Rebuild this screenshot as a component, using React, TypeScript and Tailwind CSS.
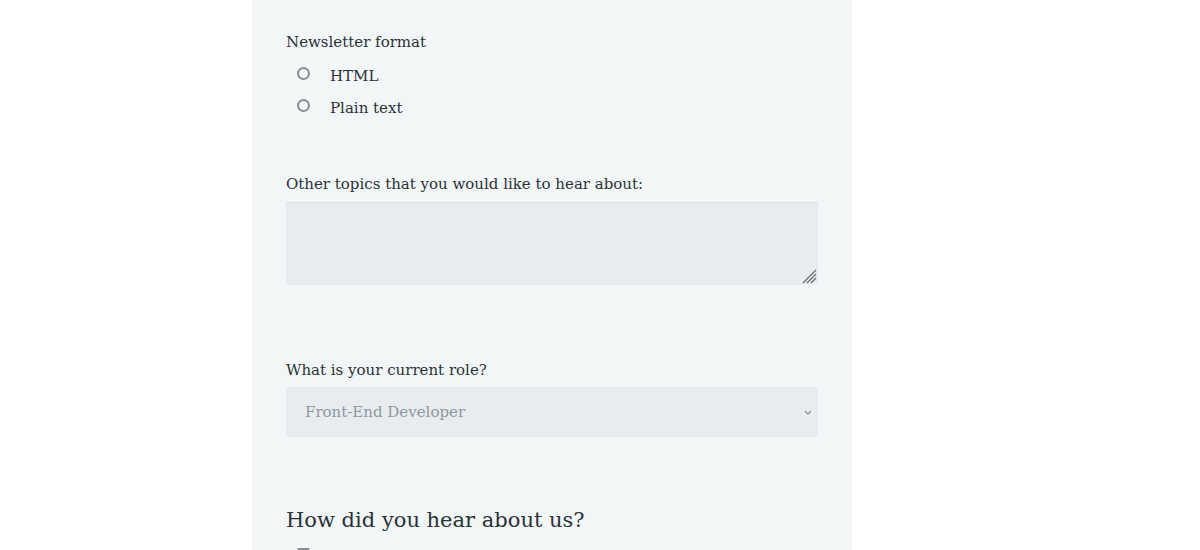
import React from "react";

const font = { fontFamily: '"DejaVu Serif", "Liberation Serif", serif' };

export default function App() {
  return (
    <div className="w-[1200px] h-[550px] overflow-hidden bg-white pl-[252px]" style={font}>
      <div className="w-[600px] h-[550px] bg-[#f2f6f7] px-[34px] pt-[32px] text-[#2b3238] text-[15px]">
        <div className="leading-[20px]">Newsletter format</div>
        <div className="mt-[13px] flex flex-col gap-[12px]">
          {["HTML", "Plain text"].map((t) => (
            <label key={t} className="flex items-center h-[20px] pl-[11px]">
              <span className="w-[13px] h-[13px] rounded-full border-2 border-[#8c8c98] bg-[#f6f7f9] -mt-[3px]" />
              <span className="ml-[20px] mt-[2px]">{t}</span>
            </label>
          ))}
        </div>
        <div className="mt-[57px] leading-[20px]">Other topics that you would like to hear about:</div>
        <div className="mt-[8px] h-[83px] bg-[#e8ecee] border-t border-[#dde3e6] relative">
          <svg className="absolute right-[1px] bottom-[1px]" width="15" height="15" viewBox="0 0 15 15">
            <path d="M1 14 L14 1 M5 14 L14 5 M9 14 L14 9" stroke="#6b6b6b" strokeWidth="1.3" />
          </svg>
        </div>
        <div className="mt-[75px] leading-[20px]">What is your current role?</div>
        <div className="mt-[7px] h-[50px] bg-[#e8ecee] rounded-[2px] flex items-center pl-[19px] pr-[5px] text-[#8e989e]">
          <span className="flex-1">Front-End Developer</span>
          <svg width="10" height="8" viewBox="0 0 10 8">
            <path d="M2 3 L5 6 L8 3" stroke="#8e989e" strokeWidth="1.4" fill="none" />
          </svg>
        </div>
        <div className="mt-[67px] text-[21px] leading-[32px] text-[#2b3238]">How did you hear about us?</div>
        <div className="mt-[12px] ml-[11px] w-[13px] h-[13px] border-2 border-[#8c8c98] rounded-[2px]" />
      </div>
    </div>
  );
}
